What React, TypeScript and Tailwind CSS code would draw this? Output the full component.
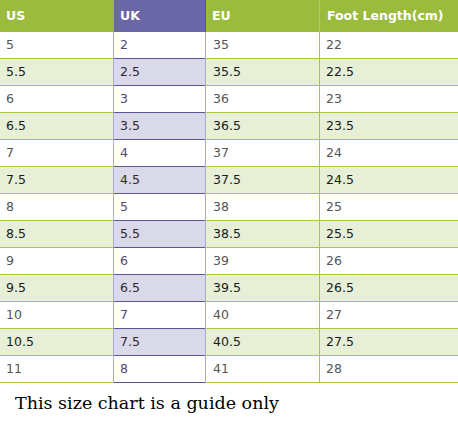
const rows: [string, string, string, string][] = [
  ["5", "2", "35", "22"],
  ["5.5", "2.5", "35.5", "22.5"],
  ["6", "3", "36", "23"],
  ["6.5", "3.5", "36.5", "23.5"],
  ["7", "4", "37", "24"],
  ["7.5", "4.5", "37.5", "24.5"],
  ["8", "5", "38", "25"],
  ["8.5", "5.5", "38.5", "25.5"],
  ["9", "6", "39", "26"],
  ["9.5", "6.5", "39.5", "26.5"],
  ["10", "7", "40", "27"],
  ["10.5", "7.5", "40.5", "27.5"],
  ["11", "8", "41", "28"],
]

const cols = "grid grid-cols-[114px_92px_114px_138px]"

export default function App() {
  return (
    <div className="w-[458px] h-[426px] bg-white font-['DejaVu_Sans',sans-serif]">
      <div className={`${cols} h-[32px] text-[12.5px] font-bold text-white`}>
        <div className="bg-[#9bbb3c] border-r border-[#9bbb3c] flex items-center pl-[6px]">US</div>
        <div className="bg-[#6b66a6] border-r border-[#5a5590] flex items-center pl-[6px]">UK</div>
        <div className="bg-[#9bbb3c] border-r border-[#b5cf64] flex items-center pl-[6px]">EU</div>
        <div className="bg-[#9bbb3c] flex items-center pl-[7px]">Foot Length(cm)</div>
      </div>
      {rows.map((r, i) => {
        const shaded = i % 2 === 1
        const green = shaded ? "bg-[#e7f0d7] text-[#1a1a1a]" : "bg-white text-[#555555]"
        const purple = shaded ? "bg-[#d9d9ea] text-[#2a2a3a]" : "bg-white text-[#4e4a78]"
        return (
          <div key={i} className={`${cols} h-[27px] text-[12.5px]`}>
            <div className={`${green} border-r border-b border-[#a9c545] flex items-center pl-[6px]`}>{r[0]}</div>
            <div className={`${purple} border-r border-b border-[#5b5691] flex items-center pl-[6px]`}>{r[1]}</div>
            <div className={`${green} border-r border-l border-b border-[#a9c545] -ml-px flex items-center pl-[7px]`}>{r[2]}</div>
            <div className={`${green} border-b border-[#a9c545] flex items-center pl-[6px]`}>{r[3]}</div>
          </div>
        )
      })}
      <p className="pl-[15px] pt-[8px] text-[17.5px] leading-[24px] text-black font-['DejaVu_Serif',serif]">
        This size chart is a guide only
      </p>
    </div>
  )
}
